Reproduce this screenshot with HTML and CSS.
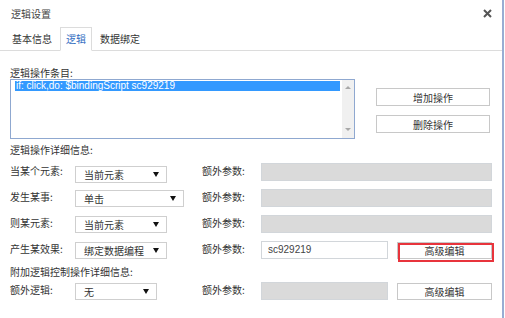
FILE: index.html
```html
<!DOCTYPE html>
<html lang="zh-CN">
<head>
    <meta charset="UTF-8">
    <title>逻辑设置</title>
    <link rel="stylesheet" href="styles.css">
</head>
<body>
    <div class="dialog">
        <div class="header">
            <span class="title">逻辑设置</span>
            <svg class="close" width="9" height="9" viewBox="0 0 9 9">
                <path d="M1 1L8 8M8 1L1 8" stroke="#555" stroke-width="2"/>
            </svg>
        </div>

        <div class="tabs">
            <div class="tab">基本信息</div>
            <div class="tab active">逻辑</div>
            <div class="tab">数据绑定</div>
        </div>

        <div class="content">
            <div class="section-label first">逻辑操作条目:</div>
            <div class="list-area">
                <div class="listbox">
                    <div class="list-items">
                        <div class="list-item selected">if: click,do: $bindingScript sc929219</div>
                    </div>
                    <div class="scrollbar">
                        <span class="arrow-up"></span>
                        <span class="arrow-down"></span>
                    </div>
                </div>
                <div class="list-buttons">
                    <button class="btn btn-op">增加操作</button>
                    <button class="btn btn-op">删除操作</button>
                </div>
            </div>

            <div class="section-label">逻辑操作详细信息:</div>

            <div class="row first">
                <span class="label">当某个元素:</span>
                <div class="select row1-select" style="width:92px">当前元素<i class="caret"></i></div>
                <span class="label">额外参数:</span>
                <div class="input disabled wide"></div>
            </div>
            <div class="row">
                <span class="label">发生某事:</span>
                <div class="select" style="width:109px">单击<i class="caret"></i></div>
                <span class="label">额外参数:</span>
                <div class="input disabled wide"></div>
            </div>
            <div class="row">
                <span class="label">则某元素:</span>
                <div class="select" style="width:92px">当前元素<i class="caret"></i></div>
                <span class="label">额外参数:</span>
                <div class="input disabled wide"></div>
            </div>
            <div class="row">
                <span class="label">产生某效果:</span>
                <div class="select" style="width:92px">绑定数据编程<i class="caret"></i></div>
                <span class="label">额外参数:</span>
                <div class="input">sc929219</div>
                <span class="marked"><button class="btn btn-edit">高级编辑</button></span>
            </div>

            <div class="section-label extra">附加逻辑控制操作详细信息:</div>

            <div class="row">
                <span class="label">额外逻辑:</span>
                <div class="select" style="width:82px">无<i class="caret"></i></div>
                <span class="label">额外参数:</span>
                <div class="input disabled"></div>
                <button class="btn btn-edit">高级编辑</button>
            </div>
        </div>
    </div>
</body>
</html>
```

FILE: styles.css
```css
body {
    margin: 0;
    font-family: "Noto Sans CJK SC", "Liberation Sans", sans-serif;
    font-size: 10px;
    color: #333;
    background: #fff;
}
.dialog {
    width: 504px;
    height: 318px;
    box-sizing: border-box;
    border-right: 2px solid #98add3;
    overflow: hidden;
}
.header {
    height: 27px;
    display: flex;
    align-items: center;
    justify-content: space-between;
    padding: 0 10px 0 11px;
}
.title {
    color: #444;
}
.tabs {
    display: flex;
    align-items: flex-end;
    height: 23px;
    border-bottom: 1px solid #dcdcdc;
    padding-left: 5px;
}
.tab {
    height: 22px;
    line-height: 21px;
    padding: 0 7px;
    margin-right: 1px;
    box-sizing: border-box;
    color: #333;
}
.tab.active {
    color: #2f6cbf;
    border: 1px solid #dcdcdc;
    border-bottom: 1px solid #fff;
    margin-bottom: -1px;
    height: 24px;
    line-height: 22px;
    padding: 0 5px;
}
.content {
    padding-left: 10px;
}
.section-label {
    height: 12px;
    line-height: 12px;
    margin-top: 5px;
}
.section-label.first {
    margin-top: 16px;
}
.section-label.extra {
    margin-top: 3px;
}
.list-area {
    display: flex;
    align-items: flex-start;
}
.listbox {
    width: 345px;
    height: 60px;
    box-sizing: border-box;
    border: 1px solid #8fa8d0;
    display: flex;
}
.list-items {
    flex: 1;
    padding: 1px 2px 0 4px;
}
.list-item {
    height: 10px;
    line-height: 10px;
    font-family: "Liberation Sans", Arial, sans-serif;
    font-size: 10px;
    padding-left: 1px;
}
.list-item.selected {
    background: #3399ff;
    color: #fff;
}
.scrollbar {
    width: 12px;
    background: #f0f0f0;
    display: flex;
    flex-direction: column;
    justify-content: space-between;
    align-items: center;
    padding: 6px 0 7px;
}
.arrow-up {
    border-left: 3px solid transparent;
    border-right: 3px solid transparent;
    border-bottom: 3px solid #a8a8a8;
}
.arrow-down {
    border-left: 3px solid transparent;
    border-right: 3px solid transparent;
    border-top: 3px solid #a8a8a8;
}
.list-buttons {
    display: flex;
    flex-direction: column;
    gap: 9px;
    margin-left: 21px;
    margin-top: 9px;
}
.btn {
    font-family: "Noto Sans CJK SC", sans-serif;
    font-size: 10px;
    color: #333;
    background: #fff;
    border: 1px solid #c8c8c8;
    padding: 0;
    box-sizing: border-box;
}
.btn-op {
    width: 114px;
    height: 18px;
}
.row {
    display: grid;
    grid-template-columns: 65px 127px 59px 127px 9px 95px;
    align-items: center;
    height: 26px;
}
.row.first {
    margin-top: 3px;
}
.label {
    margin-bottom: 4px;
}
.select {
    height: 17px;
    box-sizing: border-box;
    border: 1px solid #cfcfcf;
    background: #fff;
    padding-left: 8px;
    padding-right: 7px;
    line-height: 15px;
    display: flex;
    align-items: center;
    justify-content: space-between;
}
.row1-select {
    margin-top: 5px;
}
.caret {
    border-left: 3px solid transparent;
    border-right: 3px solid transparent;
    border-top: 5px solid #111;
}
.input {
    grid-column: 4;
    height: 18px;
    box-sizing: border-box;
    border: 1px solid #d2d6da;
    background: #fff;
    padding-left: 6px;
    line-height: 16px;
    font-family: "Liberation Sans", Arial, sans-serif;
    font-size: 10px;
    color: #444;
}
.input.disabled {
    background: #dadada;
}
.input.wide {
    grid-column: 4 / 7;
}
.btn-edit {
    grid-column: 6;
    width: 95px;
    height: 17px;
}
.marked {
    grid-column: 6;
    position: relative;
    display: flex;
}
.marked::after {
    content: "";
    position: absolute;
    left: 1px;
    top: 1px;
    right: -2px;
    bottom: -3px;
    border: 2px solid #e8343c;
}
```
